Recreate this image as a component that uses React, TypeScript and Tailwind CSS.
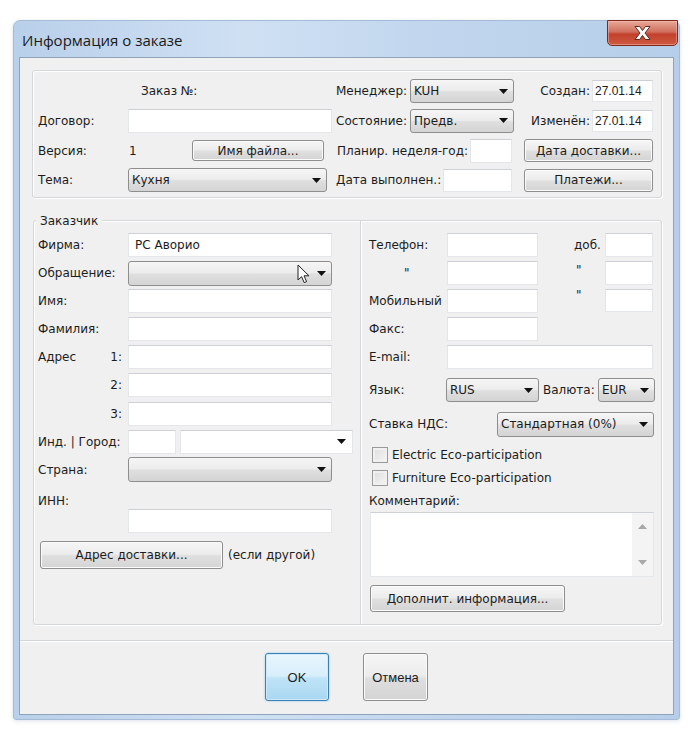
import React from "react";

const Arrow = () => (
  <svg width="9" height="5" viewBox="0 0 9 5" className="shrink-0">
    <path d="M0 0H9L4.5 5Z" fill="#111" />
  </svg>
);

type P = { className?: string; children?: React.ReactNode };

function Input({ className = "", children }: P) {
  return (
    <div
      className={
        "flex items-center bg-white border border-[#e4e7ea] border-t-[#cdd0d4] " +
        className
      }
    >
      {children}
    </div>
  );
}

function Select({ className = "", children }: P) {
  return (
    <div
      className={
        "relative flex items-center justify-between rounded-[3px] border border-[#8e8e8e] pl-[3px] pr-[5px] bg-[linear-gradient(to_bottom,#f6f6f6,#ececec_47%,#dfdfdf_53%,#d4d4d4)] " +
        className
      }
    >
      <span>{children}</span>
      <Arrow />
    </div>
  );
}

function Btn({ className = "", children }: P) {
  return (
    <div
      className={
        "flex items-center justify-center rounded-[3px] border border-[#8e8e8e] bg-[linear-gradient(to_bottom,#f6f6f6,#ececec_47%,#dfdfdf_53%,#d4d4d4)] shadow-[inset_0_0_0_1px_#fbfbfb] " +
        className
      }
    >
      {children}
    </div>
  );
}

function Check({ label }: { label: string }) {
  return (
    <div className="flex items-center h-[16px] pl-[3px]">
      <div className="w-[16px] h-[16px] border border-[#9a9a9a] bg-[linear-gradient(135deg,#dcdcdc,#f6f6f6)] shadow-[inset_0_0_0_2px_#f0f0f0]" />
      <span className="ml-[4px]">{label}</span>
    </div>
  );
}

const Cursor = () => (
  <svg
    width="14"
    height="21"
    viewBox="0 0 14 21"
    className="absolute left-[169px] top-[3px]"
  >
    <path
      d="M1 1 L1 16 L4.6 12.6 L7.2 18.6 L9.6 17.6 L7 11.8 L12 11.8 Z"
      fill="#fff"
      stroke="#222"
      strokeWidth="1"
      strokeLinejoin="round"
    />
  </svg>
);

export default function App() {
  return (
    <div className="relative w-[692px] h-[738px] bg-white pt-[20px] pl-[13px] font-['DejaVu_Sans',sans-serif] text-[12px] text-[#1c1c1c] leading-none">
      <div className="relative w-[667px] h-[700px] rounded-t-[7px] rounded-b-[3px] border border-[#a6bcd6] bg-[linear-gradient(to_right,#b9d0ea,#cfe0f3_35%,#c2d7ee_60%,#b6cee9)] shadow-[0_1px_4px_rgba(60,90,130,0.18)] flex flex-col">
        {/* title bar */}
        <div className="h-[36px] flex items-center pl-[8px] pt-[2px] shrink-0">
          <span className="font-['Open_Sans',sans-serif] text-[15px] text-[#1a1a1a]">
            Информация о заказе
          </span>
        </div>
        <div className="absolute right-[1px] top-[-1px] w-[71px] h-[26px] rounded-b-[5px] border border-[#7d2a1e] bg-[linear-gradient(to_bottom,#e9a898,#d0705e_45%,#c2412c_55%,#cf5a40)] shadow-[inset_0_0_0_1px_rgba(255,200,190,0.45)] flex items-center justify-center">
          <svg width="19" height="16" viewBox="0 0 19 16">
            <path
              d="M2 1.5H6.6L9.5 5.6L12.4 1.5H17L12 8L17 14.5H12.4L9.5 10.4L6.6 14.5H2L7 8Z"
              fill="#fff"
              stroke="#5e2a22"
              strokeWidth="1"
              strokeLinejoin="round"
            />
          </svg>
        </div>

        {/* content */}
        <div className="mx-[5px] mb-[4px] flex-1 bg-[#f0f0f0] border border-[#8fa3bb] flex flex-col">
          {/* upper group */}
          <div className="ml-[12px] mt-[12px] w-[630px] h-[128px] rounded-[3px] border border-[#d3d7da] shadow-[inset_1px_1px_0_#fff,1px_1px_0_#fff] pt-[8px]">
            <div className="grid grid-cols-[95px_204px_78px_104px_78px_62px] grid-rows-[24px_24px_24px_24px] gap-y-[5.8px]">
              {/* row 1 */}
              <div className="col-span-2 flex items-center pl-[108px]">Заказ №:</div>
              <div className="flex items-center pl-[4px]">Менеджер:</div>
              <Select className="h-[24px]">KUH</Select>
              <div className="flex items-center justify-end pr-[2px]">Создан:</div>
              <Input className="self-center h-[22px] w-[61px] pl-[2px] font-['Liberation_Sans',sans-serif]">
                27.01.14
              </Input>
              {/* row 2 */}
              <div className="flex items-center pl-[5px]">Договор:</div>
              <Input className="self-center h-[24px] w-[204px]" />
              <div className="flex items-center pl-[4px]">Состояние:</div>
              <Select className="h-[24px]">Предв.</Select>
              <div className="flex items-center justify-end pr-[2px]">Изменён:</div>
              <Input className="self-center h-[22px] w-[61px] pl-[2px] font-['Liberation_Sans',sans-serif]">
                27.01.14
              </Input>
              {/* row 3 */}
              <div className="flex items-center pl-[5px]">Версия:</div>
              <div className="flex items-center">
                <span className="w-[64px] pl-[1px]">1</span>
                <Btn className="w-[132px] h-[21px]">Имя файла...</Btn>
              </div>
              <div className="col-span-2 flex items-center pl-[5px]">
                <span className="whitespace-nowrap">Планир. неделя-год:</span>
                <Input className="ml-auto mr-[2px] w-[42px] h-[24px] shrink-0" />
              </div>
              <div className="col-span-2 flex items-center">
                <Btn className="ml-[10px] w-[129px] h-[23px]">Дата доставки...</Btn>
              </div>
              {/* row 4 */}
              <div className="flex items-center pl-[5px]">Тема:</div>
              <Select className="w-[199px] h-[24px]">Кухня</Select>
              <div className="col-span-2 flex items-center pl-[4px]">
                <span className="whitespace-nowrap">Дата выполнен.:</span>
                <Input className="ml-auto mr-[2px] w-[69px] h-[23px] shrink-0" />
              </div>
              <div className="col-span-2 flex items-center">
                <Btn className="ml-[10px] w-[129px] h-[23px]">Платежи...</Btn>
              </div>
            </div>
          </div>

          {/* lower group */}
          <div className="relative ml-[13px] mt-[22px] w-[629px] h-[405px] rounded-[3px] border border-[#d3d7da] shadow-[inset_1px_1px_0_#fff,1px_1px_0_#fff] flex">
            <div className="absolute left-[2px] top-[-7px] px-[4px] bg-[#f0f0f0] leading-[14px]">
              Заказчик
            </div>
            {/* left panel */}
            <div className="w-[327px] border-r border-[#d3d7da] shadow-[1px_0_0_#fff] pt-[12px] flex flex-col">
              <div className="flex flex-col gap-y-[4.1px]">
                <div className="flex items-center h-[24px]">
                  <span className="w-[94px] pl-[4px]">Фирма:</span>
                  <Input className="w-[204px] h-[24px] pl-[6px]">PC Аворио</Input>
                </div>
                <div className="flex items-center h-[24px]">
                  <span className="w-[94px] pl-[4px]">Обращение:</span>
                  <Select className="w-[204px] h-[25px]">{""}</Select>
                </div>
                <div className="flex items-center h-[24px]">
                  <span className="w-[94px] pl-[4px]">Имя:</span>
                  <Input className="w-[204px] h-[24px]" />
                </div>
                <div className="flex items-center h-[24px]">
                  <span className="w-[94px] pl-[4px]">Фамилия:</span>
                  <Input className="w-[204px] h-[24px]" />
                </div>
                <div className="flex items-center h-[24px]">
                  <span className="w-[94px] pl-[4px] pr-[6px] flex justify-between">
                    <span>Адрес</span>
                    <span>1:</span>
                  </span>
                  <Input className="w-[204px] h-[24px]" />
                </div>
                <div className="flex items-center h-[24px]">
                  <span className="w-[94px] pr-[6px] text-right">2:</span>
                  <Input className="w-[204px] h-[24px]" />
                </div>
                <div className="flex items-center h-[24px]">
                  <span className="w-[94px] pr-[6px] text-right">3:</span>
                  <Input className="w-[204px] h-[24px]" />
                </div>
                <div className="flex items-center h-[24px]">
                  <span className="w-[94px] pl-[4px] whitespace-nowrap">Инд. | Город:</span>
                  <Input className="w-[48px] h-[24px]" />
                  <Input className="ml-[4px] w-[173px] h-[24px] justify-end pr-[6px]">
                    <Arrow />
                  </Input>
                </div>
                <div className="flex items-center h-[24px]">
                  <span className="w-[94px] pl-[4px]">Страна:</span>
                  <Select className="w-[204px] h-[25px]">{""}</Select>
                </div>
              </div>
              <div className="mt-[11px] h-[16px] flex items-center pl-[4px]">ИНН:</div>
              <Input className="mt-[0px] ml-[94px] w-[204px] h-[24px]" />
              <div className="mt-[8px] flex items-center">
                <Btn className="ml-[6px] w-[183px] h-[28px]">Адрес доставки...</Btn>
                <span className="ml-[5px] pb-[0px]">(если другой)</span>
              </div>
            </div>

            {/* right panel */}
            <div className="flex-1 pt-[12px] pl-[8px] flex flex-col">
              <div className="flex items-center h-[24px]">
                <span className="w-[78px]">Телефон:</span>
                <Input className="w-[91px] h-[24px]" />
                <span className="w-[67px] pl-[36px]">доб.</span>
                <Input className="w-[48px] h-[24px]" />
              </div>
              <div className="mt-[4px] flex items-center h-[24px]">
                <span className="w-[78px] pl-[35px]">"</span>
                <Input className="w-[91px] h-[24px]" />
                <span className="w-[67px] pl-[38px] self-start pt-[3px]">"</span>
                <Input className="w-[48px] h-[24px]" />
              </div>
              <div className="mt-[4px] flex items-center h-[24px]">
                <span className="w-[78px]">Мобильный</span>
                <Input className="w-[91px] h-[24px]" />
                <span className="w-[67px] pl-[38px] self-start pt-[0px]">"</span>
                <Input className="w-[48px] h-[23px] self-start" />
              </div>
              <div className="mt-[4px] flex items-center h-[24px]">
                <span className="w-[78px]">Факс:</span>
                <Input className="w-[91px] h-[24px]" />
              </div>
              <div className="mt-[4px] flex items-center h-[24px]">
                <span className="w-[78px]">E-mail:</span>
                <Input className="w-[206px] h-[24px]" />
              </div>
              <div className="mt-[9px] flex items-center h-[24px]">
                <span className="w-[77px]">Язык:</span>
                <Select className="w-[93px] h-[24px]">RUS</Select>
                <span className="ml-[4px]">Валюта:</span>
                <Select className="ml-auto mr-[6px] w-[57px] h-[24px]">EUR</Select>
              </div>
              <div className="mt-[10px] flex items-center h-[24px]">
                <span className="w-[128px]">Ставка НДС:</span>
                <Select className="w-[157px] h-[25px]">Стандартная (0%)</Select>
              </div>
              <div className="mt-[11px]">
                <Check label="Electric Eco-participation" />
              </div>
              <div className="mt-[7px]">
                <Check label="Furniture Eco-participation" />
              </div>
              <div className="mt-[8px] h-[14px] flex items-center">Комментарий:</div>
              <div className="mt-[4px] ml-[1px] w-[284px] h-[65px] bg-white border border-[#e4e7ea] border-t-[#cdd0d4] flex justify-end">
                <div className="w-[21px] h-full bg-[#f4f4f4] flex flex-col items-center justify-between py-[11px]">
                  <svg width="9" height="5" viewBox="0 0 9 5">
                    <path d="M0 5L4.5 0L9 5Z" fill="#a8a8a8" />
                  </svg>
                  <svg width="9" height="5" viewBox="0 0 9 5">
                    <path d="M0 0H9L4.5 5Z" fill="#a8a8a8" />
                  </svg>
                </div>
              </div>
              <Btn className="mt-[8px] ml-[1px] w-[195px] h-[27px]">Дополнит. информация...</Btn>
            </div>
          </div>

          {/* separator */}
          <div className="mt-[15px] h-px bg-[#d2d5d8] shadow-[0_1px_0_#fff]" />

          {/* bottom buttons */}
          <div className="mt-[12px] flex justify-center gap-[34px]">
            <div className="w-[64px] h-[48px] rounded-[3px] border border-[#3c7fb1] bg-[linear-gradient(to_bottom,#e9f5fd,#d8effb_47%,#bfe3f7_53%,#a9d7f2)] shadow-[inset_0_0_0_1px_#cfeafb,0_0_2px_#7fc2ea] flex items-center justify-center font-['Liberation_Sans',sans-serif] text-[13px]">
              OK
            </div>
            <Btn className="w-[65px] h-[48px] font-['Liberation_Sans',sans-serif] text-[13px]">Отмена</Btn>
          </div>
        </div>
      </div>
      {/* mouse cursor over Обращение (overlay) */}
      <div className="absolute left-[128px] top-[261px] w-[204px] h-[25px] pointer-events-none">
        <Cursor />
      </div>
    </div>
  );
}
